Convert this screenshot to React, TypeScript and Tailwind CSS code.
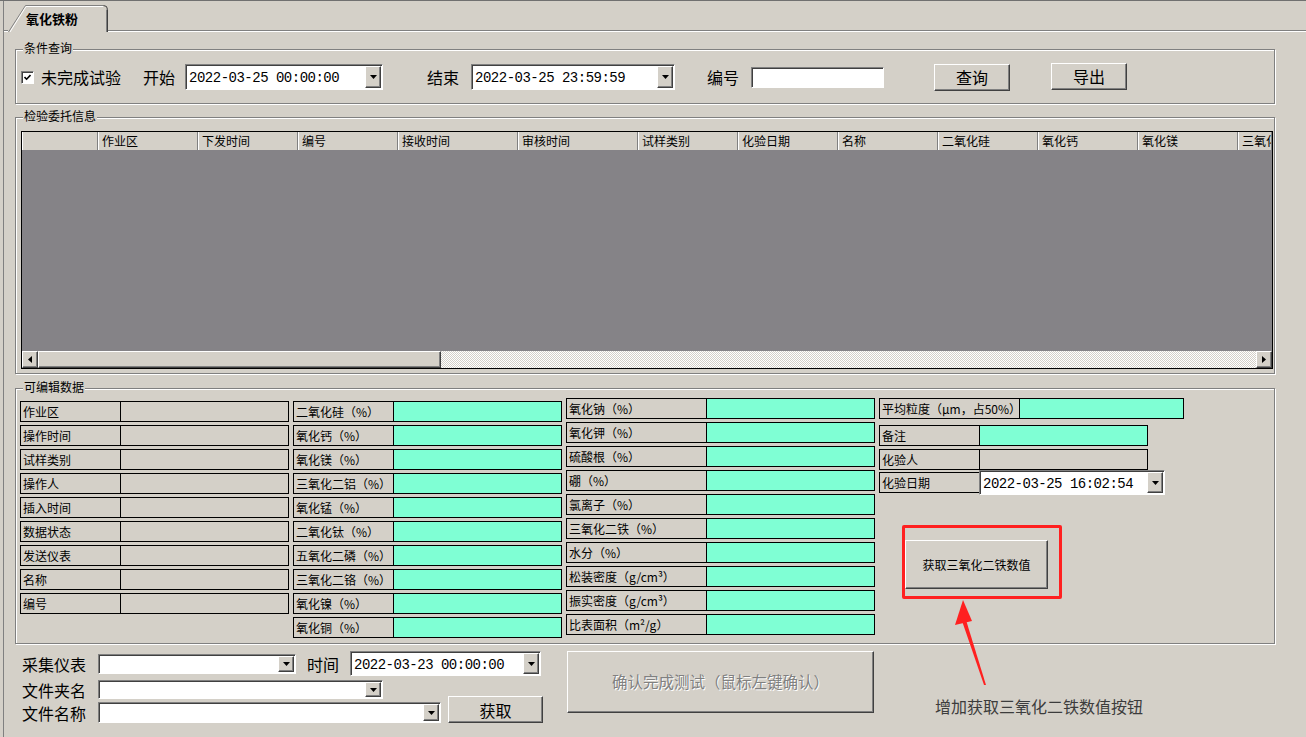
import React from 'react';

const MONO = "font-['Liberation_Mono',monospace]";
const RAISED =
  'bg-[#d4d0c8] border border-t-white border-l-white border-r-[#404040] border-b-[#404040] shadow-[inset_-1px_-1px_0_#808080]';
const SUNKEN =
  'bg-white border border-t-[#808080] border-l-[#808080] border-r-white border-b-white';

function Tri({ dir = 'down' }: { dir?: 'down' | 'left' | 'right' }) {
  if (dir === 'left')
    return (
      <svg width="4" height="7" viewBox="0 0 4 7">
        <path d="M4 0V7L0 3.5Z" fill="#000" />
      </svg>
    );
  if (dir === 'right')
    return (
      <svg width="4" height="7" viewBox="0 0 4 7">
        <path d="M0 0V7L4 3.5Z" fill="#000" />
      </svg>
    );
  return (
    <svg width="7" height="4" viewBox="0 0 7 4">
      <path d="M0 0H7L3.5 4Z" fill="#000" />
    </svg>
  );
}

function Btn({ className, children }: { className: string; children?: React.ReactNode }) {
  return <div className={`flex items-center justify-center ${RAISED} ${className}`}>{children}</div>;
}

function Combo({ className, text }: { className: string; text?: string }) {
  return (
    <div className={`flex ${SUNKEN} ${className}`}>
      <div className="flex flex-1 p-px shadow-[inset_1px_1px_0_#404040]">
        <div
          className={`flex flex-1 items-center overflow-hidden whitespace-nowrap pl-[2px] pt-[2px] text-[14px] leading-none tracking-[-0.5px] ${MONO}`}
        >
          {text}
        </div>
        <div className={`flex w-[16px] items-center justify-center ${RAISED}`}>
          <Tri />
        </div>
      </div>
    </div>
  );
}

function Group({ title, className, children }: { title: string; className: string; children?: React.ReactNode }) {
  return (
    <div
      className={`relative ml-[11px] w-[1260px] border border-[#808080] shadow-[inset_1px_1px_0_#fff,1px_1px_0_#fff] ${className}`}
    >
      <span className="absolute -top-[9px] left-[7px] bg-[#d4d0c8] px-[1px] text-[12px] leading-[14px]">{title}</span>
      {children}
    </div>
  );
}

function Cell({ label, w, lw, fill }: { label: string; w: string; lw: string; fill?: string }) {
  return (
    <div className={`flex h-[21px] border border-black ${w}`}>
      <div className={`flex items-center whitespace-nowrap border-r border-black pl-[2px] text-[12px] leading-none ${lw}`}>
        {label}
      </div>
      <div className={`flex-1 ${fill ?? ''}`} />
    </div>
  );
}

const headCols = [
  { t: '', w: 'w-[76px]' },
  { t: '作业区', w: 'w-[100px]' },
  { t: '下发时间', w: 'w-[100px]' },
  { t: '编号', w: 'w-[100px]' },
  { t: '接收时间', w: 'w-[120px]' },
  { t: '审核时间', w: 'w-[120px]' },
  { t: '试样类别', w: 'w-[100px]' },
  { t: '化验日期', w: 'w-[100px]' },
  { t: '名称', w: 'w-[100px]' },
  { t: '二氧化硅', w: 'w-[100px]' },
  { t: '氧化钙', w: 'w-[100px]' },
  { t: '氧化镁', w: 'w-[100px]' },
  { t: '三氧化二铝', w: 'flex-1' },
];

const col1 = ['作业区', '操作时间', '试样类别', '操作人', '插入时间', '数据状态', '发送仪表', '名称', '编号'];
const col2 = [
  '二氧化硅（%）',
  '氧化钙（%）',
  '氧化镁（%）',
  '三氧化二铝（%）',
  '氧化锰（%）',
  '二氧化钛（%）',
  '五氧化二磷（%）',
  '三氧化二铬（%）',
  '氧化镍（%）',
  '氧化铜（%）',
];
const col3 = [
  '氧化钠（%）',
  '氧化钾（%）',
  '硫酸根（%）',
  '硼（%）',
  '氯离子（%）',
  '三氧化二铁（%）',
  '水分（%）',
  '松装密度（g/cm³）',
  '振实密度（g/cm³）',
  '比表面积（m²/g）',
];

export default function App() {
  return (
    <div className="relative h-[737px] w-[1306px] overflow-hidden border-t border-[#707070] bg-[#d4d0c8] font-['Noto_Sans_CJK_SC','Liberation_Sans',sans-serif] text-black">
      <div className="ml-[3px] flex h-full flex-col border-l border-[#808080]">
        {/* 标签页 */}
        <div className="flex h-[31px] items-end">
          <div className="h-[2px] w-[4px] border-t border-[#808080] bg-white" />
          <div className="relative flex h-[27px] w-[100px] items-center pl-[18px]">
            <svg className="absolute inset-0" width="100" height="27" viewBox="0 0 100 27">
              <path d="M0.5 27 L17.5 0.5 H95.5 Q99.5 0.5 99.5 4.5 V27 Z" fill="#d4d0c8" />
              <path d="M0.5 27 L17.5 0.5 H95.5" stroke="#808080" fill="none" />
              <path d="M2 27 L18 1.5 H95" stroke="#fff" fill="none" />
              <path d="M95.5 0.5 Q99.5 0.5 99.5 4.5 V27" stroke="#404040" fill="none" />
              <path d="M98.5 4.5 V27" stroke="#808080" fill="none" />
            </svg>
            <span className="relative text-[13px] font-bold leading-none">氧化铁粉</span>
          </div>
          <div className="h-[2px] flex-1 border-t border-[#808080] bg-white" />
        </div>

        {/* 条件查询 */}
        <Group title="条件查询" className="mt-[17px] h-[55px]">
          <div className="flex h-full items-center pl-[5px] pt-[1px]">
            <div className={`flex h-[13px] w-[13px] items-center justify-center shadow-[inset_1px_1px_0_#404040] ${SUNKEN}`}>
              <svg width="7" height="7" viewBox="0 0 7 7">
                <path d="M0.5 3 L2.6 5.2 L6.5 1" stroke="#000" strokeWidth="1.6" fill="none" />
              </svg>
            </div>
            <span className="ml-[7px] text-[16px] leading-none">未完成试验</span>
            <span className="ml-[22px] text-[16px] leading-none">开始</span>
            <Combo className="ml-[10px] h-[26px] w-[198px]" text="2022-03-25 00:00:00" />
            <span className="ml-[44px] text-[16px] leading-none">结束</span>
            <Combo className="ml-[12px] h-[26px] w-[204px]" text="2022-03-25 23:59:59" />
            <span className="ml-[32px] text-[16px] leading-none">编号</span>
            <div className={`ml-[12px] h-[21px] w-[133px] shadow-[inset_1px_1px_0_#404040] ${SUNKEN}`} />
            <Btn className="ml-[50px] h-[27px] w-[76px] text-[16px] leading-none">查询</Btn>
            <Btn className="ml-[41px] h-[27px] w-[76px] -translate-y-px text-[16px] leading-none">导出</Btn>
          </div>
        </Group>

        {/* 检验委托信息 */}
        <Group title="检验委托信息" className="mt-[13px] h-[257px]">
          <div className="ml-[5px] mt-[13px] flex h-[238px] w-[1252px] flex-col border border-black">
            <div className="flex h-[18px] bg-[#d4d0c8]">
              {headCols.map((c, i) => (
                <div
                  key={i}
                  className={`flex items-center overflow-hidden whitespace-nowrap border-r border-[#808080] pl-[4px] text-[12px] leading-none shadow-[inset_1px_0_0_#fff] ${c.w}`}
                >
                  {c.t}
                </div>
              ))}
            </div>
            <div className="flex-1 bg-[#858387]" />
            <div className="flex h-[17px]">
              <Btn className="w-[16px]">
                <Tri dir="left" />
              </Btn>
              <Btn className="w-[403px]" />
              <div className="flex-1 bg-[repeating-conic-gradient(#fff_0_25%,#d4d0c8_0_50%)] bg-[length:2px_2px]" />
              <Btn className="w-[16px]">
                <Tri dir="right" />
              </Btn>
            </div>
          </div>
        </Group>

        {/* 可编辑数据 */}
        <Group title="可编辑数据" className="mt-[14px] h-[256px]">
          <div className="flex items-start">
            <div className="ml-[4px] mt-[12px] flex flex-col gap-[3px]">
              {col1.map((l) => (
                <Cell key={l} label={l} w="w-[269px]" lw="w-[100px]" />
              ))}
            </div>
            <div className="ml-[4px] mt-[12px] flex flex-col gap-[3px]">
              {col2.map((l) => (
                <Cell key={l} label={l} w="w-[269px]" lw="w-[100px]" fill="bg-[#7fffd4]" />
              ))}
            </div>
            <div className="ml-[4px] mt-[9px] flex flex-col gap-[3px]">
              {col3.map((l) => (
                <Cell key={l} label={l} w="w-[309px]" lw="w-[140px]" fill="bg-[#7fffd4]" />
              ))}
            </div>
            <div className="ml-[4px] mt-[9px] flex flex-col">
              <Cell label="平均粒度（μm，占50%）" w="w-[305px]" lw="w-[140px]" fill="bg-[#7fffd4]" />
              <div className="mt-[6px]">
                <Cell label="备注" w="w-[269px]" lw="w-[100px]" fill="bg-[#7fffd4]" />
              </div>
              <div className="mt-[3px]">
                <Cell label="化验人" w="w-[269px]" lw="w-[100px]" />
              </div>
              <div className="flex h-[25px] items-center">
                <div className="flex h-[21px] w-[101px] items-center border border-black pl-[2px] text-[12px] leading-none">
                  化验日期
                </div>
                <Combo className="-ml-px h-[25px] w-[186px]" text="2022-03-25 16:02:54" />
              </div>
              <div className="ml-[23px] mt-[30px] h-[74px] w-[160px] rounded-[2px] border-[3px] border-[#ff2020] pt-[12px]">
                <Btn className="h-[49px] w-[143px] text-[12px] leading-none">获取三氧化二铁数值</Btn>
              </div>
            </div>
          </div>
        </Group>

        {/* 底部采集 */}
        <div className="flex">
          <div className="ml-[18px] flex flex-col">
            <div className="mt-[6px] flex h-[27px] items-center">
              <span className="w-[64px] text-[16px] leading-none">采集仪表</span>
              <Combo className="ml-[12px] h-[20px] w-[198px]" />
              <span className="ml-[11px] text-[16px] leading-none">时间</span>
              <Combo className="ml-[11px] h-[25px] w-[191px]" text="2022-03-23 00:00:00" />
            </div>
            <div className="flex items-end">
              <div className="flex flex-col">
                <div className="mt-[3px] flex h-[19px] items-center">
                  <span className="w-[64px] text-[16px] leading-none">文件夹名</span>
                  <Combo className="ml-[12px] h-[19px] w-[285px]" />
                </div>
                <div className="mt-[3px] flex h-[21px] items-center">
                  <span className="w-[64px] text-[16px] leading-none">文件名称</span>
                  <Combo className="ml-[12px] h-[21px] w-[343px]" />
                </div>
              </div>
              <Btn className="ml-[7px] h-[27px] w-[95px] text-[16px] leading-none">获取</Btn>
            </div>
          </div>
          <Btn className="ml-[24px] mt-[7px] h-[62px] w-[307px] text-[15.5px] leading-none text-[#808080] [text-shadow:1px_1px_0_#fff]">
            确认完成测试（鼠标左键确认）
          </Btn>
          <span className="ml-[61px] mt-[52px] text-[16px] leading-[20px] text-[#3c3c3c]">增加获取三氧化二铁数值按钮</span>
        </div>
      </div>

      {/* 标注箭头 */}
      <svg className="pointer-events-none absolute left-0 top-[-1px]" width="1306" height="737" viewBox="0 0 1306 737">
        <path d="M963 600 L955 625 L972 621 Z" fill="#ff2020" />
        <path d="M962 621 L966 620 L986 685 L984 685 Z" fill="#ff2020" />
      </svg>
    </div>
  );
}
